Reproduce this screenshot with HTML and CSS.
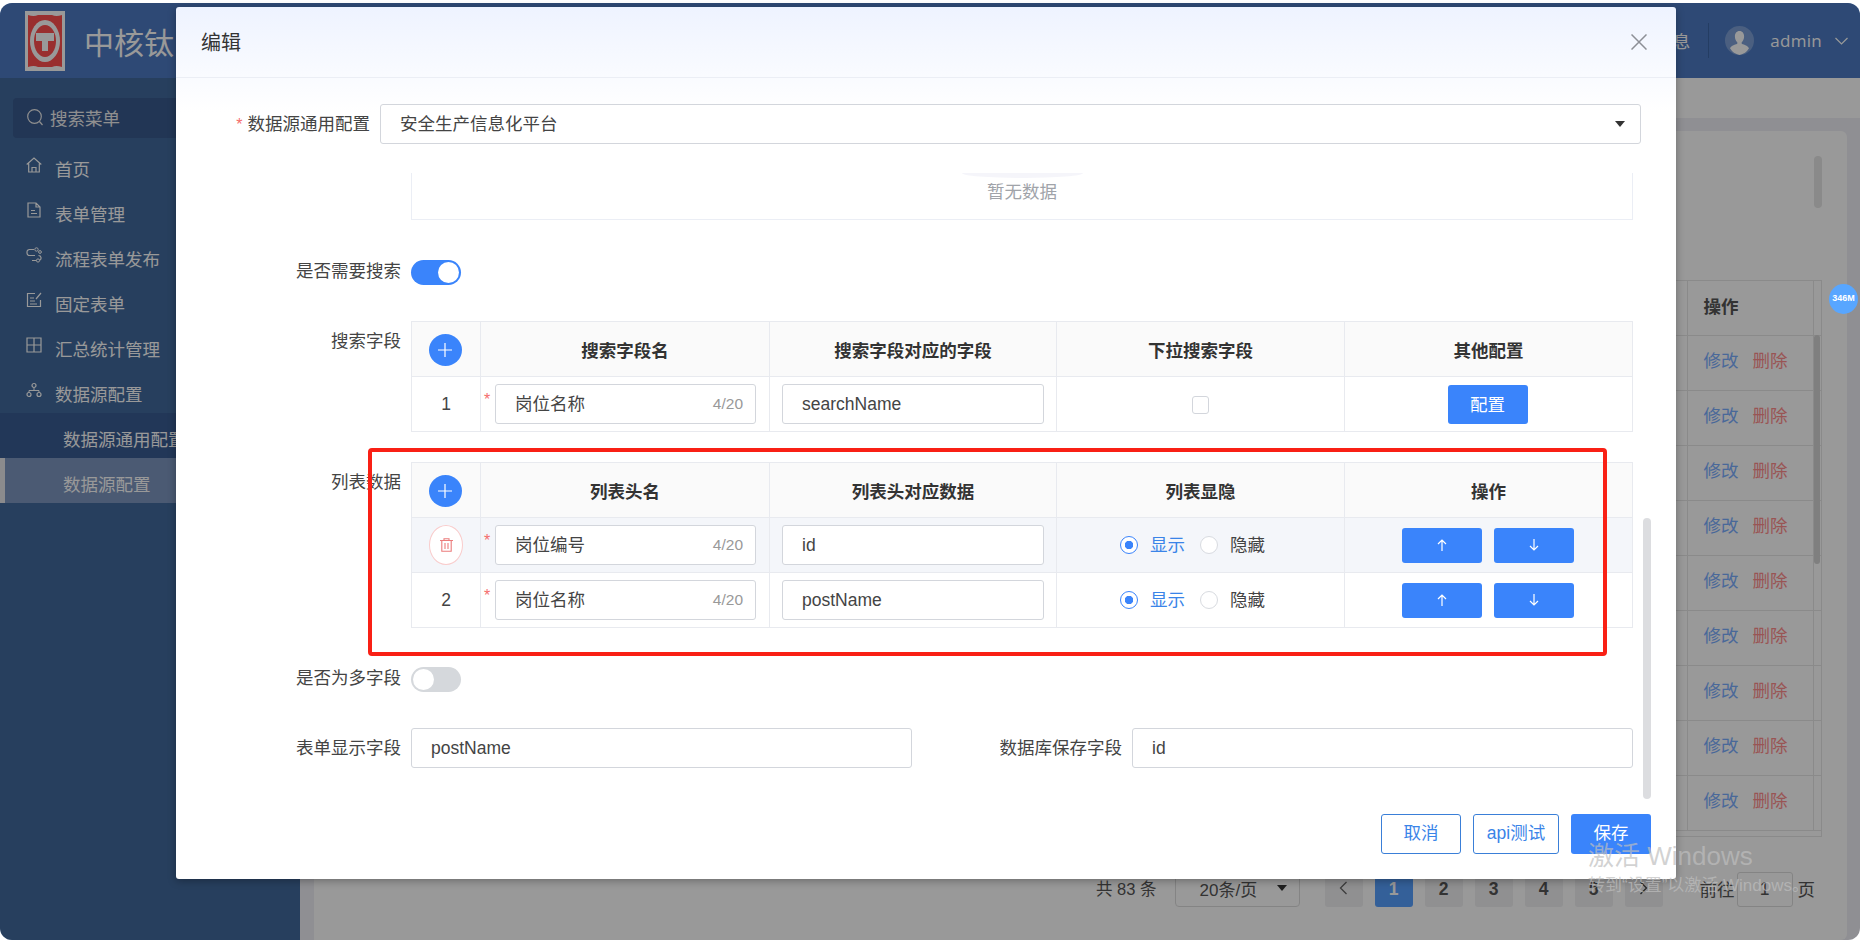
FILE: index.html
```html
<!DOCTYPE html>
<html lang="zh-CN">
<head>
    <meta charset="UTF-8">
    <title>数据源配置</title>
    <link rel="stylesheet" href="styles.css">
</head>
<body>
    <div class="app">
        <!-- Top bar -->
        <header class="topbar">
            <div class="brand">
                <svg class="logo" width="40" height="60" viewBox="0 0 40 60">
                    <rect width="40" height="60" fill="#fff"/>
                    <path d="M3 4q6 2 10 0h14q4 2 10 0v52q-6-2-10 0H13q-4-2-10 0z" fill="#ff4f4f"/>
                    <ellipse cx="20" cy="30" rx="15" ry="21" fill="#fff"/>
                    <ellipse cx="20" cy="30" rx="11" ry="16" fill="#ff4f4f"/>
                    <path d="M11 22h18v8h-6v10h-6V30h-6z" fill="#fff"/>
                </svg>
                <span class="brand-name">中核钛</span>
            </div>
            <div class="user-area">
                <span class="msg">消息</span>
                <span class="divider"></span>
                <svg class="avatar" width="29" height="29" viewBox="0 0 29 29">
                    <circle cx="14.5" cy="14.5" r="14.5" fill="#7d9fd6"/>
                    <path d="M14.5 5c3 0 4.600 2.400 4.600 5.500 0 2.500-1 4.500-2.400 5.700v1.600c2.800 1 6.300 2 7.300 4.500A14 14 0 0 1 14.500 29a14 14 0 0 1-9.500-6.700c1-2.500 4.500-3.500 7.300-4.500v-1.600c-1.400-1.200-2.400-3.200-2.400-5.700C9.900 7.400 11.500 5 14.500 5z" fill="#fff"/>
                </svg>
                <span class="username">admin</span>
                <svg class="chevron" width="13" height="8" viewBox="0 0 13 8"><path d="M.5 1l6 6 6-6" fill="none" stroke="#fff" stroke-width="1.200"/></svg>
            </div>
        </header>

        <div class="layout">
            <!-- Sidebar -->
            <aside class="sidebar">
                <div class="menu-search">
                    <svg width="16" height="17" viewBox="0 0 16 17"><circle cx="7.500" cy="7.500" r="6.800" fill="none" stroke="#eee" stroke-width="1.200"/><path d="M12.500 12.500l3 3.500" stroke="#eee" stroke-width="1.200"/></svg>
                    <span>搜索菜单</span>
                </div>
                <ul class="menu">
                    <li class="menu-item">
                        <svg width="16" height="16" viewBox="0 0 16 16"><path d="M.7 7.500L8 1l7.300 6.500M2.700 6.500V15h10.600V6.500M6 15v-4.500h4V15" fill="none" stroke="#fff" stroke-width="1.200"/></svg>
                        <span>首页</span>
                    </li>
                    <li class="menu-item">
                        <svg width="16" height="16" viewBox="0 0 16 16"><path d="M2 1h8l4 4v10H2zM10 1v4h4M5 8.500h4M5 11.500h6" fill="none" stroke="#fff" stroke-width="1.200"/></svg>
                        <span>表单管理</span>
                    </li>
                    <li class="menu-item">
                        <svg width="16" height="16" viewBox="0 0 16 16"><path d="M8 2.500H3.500A2.500 2.500 0 0 0 1 5v1a2.500 2.500 0 0 0 2.500 2.500H9M12.500 8.500a2.500 2.500 0 0 1 1 4.800M10.500 13.500H6" fill="none" stroke="#fff" stroke-width="1.200"/><circle cx="10.500" cy="2.500" r="1.700" fill="none" stroke="#fff"/><circle cx="14" cy="5" r="1.400" fill="none" stroke="#fff"/><circle cx="12" cy="13.500" r="1.600" fill="none" stroke="#fff"/></svg>
                        <span>流程表单发布</span>
                    </li>
                    <li class="menu-item">
                        <svg width="16" height="16" viewBox="0 0 16 16"><path d="M9 1.500H1.500v13h13V8M4 6h4M4 9h5M4 12h7M10 7l5-6" fill="none" stroke="#fff" stroke-width="1.200"/></svg>
                        <span>固定表单</span>
                    </li>
                    <li class="menu-item">
                        <svg width="16" height="16" viewBox="0 0 16 16"><path d="M1 1h14v14H1zM1 8h14M8 1v14" fill="none" stroke="#fff" stroke-width="1.200"/></svg>
                        <span>汇总统计管理</span>
                    </li>
                    <li class="menu-item">
                        <svg width="16" height="16" viewBox="0 0 16 16"><circle cx="8" cy="3.500" r="2" fill="none" stroke="#fff" stroke-width="1.200"/><circle cx="3" cy="12.500" r="2" fill="none" stroke="#fff" stroke-width="1.200"/><circle cx="13" cy="12.500" r="2" fill="none" stroke="#fff" stroke-width="1.200"/><path d="M3 10.500V8.500h10v2M8 5.500v3" fill="none" stroke="#fff"/></svg>
                        <span>数据源配置</span>
                    </li>
                    <li class="sub-item">数据源通用配置</li>
                    <li class="sub-item sub-item-active">数据源配置</li>
                </ul>
            </aside>

            <!-- Page behind the dialog -->
            <main class="main">
                <div class="tabs-bar"></div>
                <section class="card">
                    <div class="data-table">
                        <table>
                            <thead>
                                <tr><th></th><th class="op-col">操作</th><th class="gutter"></th></tr>
                            </thead>
                            <tbody>
                                <tr><td></td><td class="op-col"><a class="link-edit">修改</a><a class="link-del">删除</a></td><td class="gutter"></td></tr>
                                <tr><td></td><td class="op-col"><a class="link-edit">修改</a><a class="link-del">删除</a></td><td class="gutter"></td></tr>
                                <tr><td></td><td class="op-col"><a class="link-edit">修改</a><a class="link-del">删除</a></td><td class="gutter"></td></tr>
                                <tr><td></td><td class="op-col"><a class="link-edit">修改</a><a class="link-del">删除</a></td><td class="gutter"></td></tr>
                                <tr><td></td><td class="op-col"><a class="link-edit">修改</a><a class="link-del">删除</a></td><td class="gutter"></td></tr>
                                <tr><td></td><td class="op-col"><a class="link-edit">修改</a><a class="link-del">删除</a></td><td class="gutter"></td></tr>
                                <tr><td></td><td class="op-col"><a class="link-edit">修改</a><a class="link-del">删除</a></td><td class="gutter"></td></tr>
                                <tr><td></td><td class="op-col"><a class="link-edit">修改</a><a class="link-del">删除</a></td><td class="gutter"></td></tr>
                                <tr><td></td><td class="op-col"><a class="link-edit">修改</a><a class="link-del">删除</a></td><td class="gutter"></td></tr>
                            </tbody>
                        </table>
                        <div class="table-thumb"></div>
                    </div>
                    <div class="pager">
                        <span class="pager-total">共 83 条</span>
                        <div class="pager-size"><span>20条/页</span><i class="caret"></i></div>
                        <button class="page-btn">
                            <svg width="9" height="14" viewBox="0 0 9 14"><path d="M7.500 1L1.500 7l6 6" fill="none" stroke="#666" stroke-width="1.300"/></svg>
                        </button>
                        <button class="page-btn page-btn-active">1</button>
                        <button class="page-btn">2</button>
                        <button class="page-btn">3</button>
                        <button class="page-btn">4</button>
                        <button class="page-btn">5</button>
                        <button class="page-btn">
                            <svg width="9" height="14" viewBox="0 0 9 14"><path d="M1.500 1l6 6-6 6" fill="none" stroke="#444" stroke-width="1.300"/></svg>
                        </button>
                        <span class="pager-goto">前往</span>
                        <div class="pager-input">1</div>
                        <span class="pager-unit">页</span>
                    </div>
                    <div class="card-thumb"></div>
                </section>
            </main>
        </div>

        <div class="mask"></div>
    </div>

    <!-- Edit dialog -->
    <div class="dialog">
        <div class="dialog-header">
            <span class="dialog-title">编辑</span>
            <svg width="16" height="16" viewBox="0 0 16 16"><path d="M.5.500l15 15M15.500.500l-15 15" stroke="#8c8f96" stroke-width="1.500"/></svg>
        </div>

        <div class="source-row">
            <label class="source-label"><span class="star">*</span>数据源通用配置</label>
            <div class="select-box"><span class="cjk-text">安全生产信息化平台</span><i class="caret"></i></div>
        </div>

        <div class="form-area">
            <div class="empty-table">
                <div class="empty-image"></div>
                <span>暂无数据</span>
            </div>

            <div class="form-item item-toggle">
                <label>是否需要搜索</label>
                <div class="switch switch-on"><i></i></div>
            </div>

            <div class="form-item item-search">
                <label>搜索字段</label>
                <table class="edit-table">
                    <colgroup><col class="col-idx"><col class="col-a"><col class="col-b"><col class="col-c"><col class="col-d"></colgroup>
                    <thead>
                        <tr>
                            <th><button class="add-btn"><svg width="14" height="14" viewBox="0 0 14 14"><path d="M7 0v14M0 7h14" stroke="#fff" stroke-width="1.200"/></svg></button></th>
                            <th>搜索字段名</th>
                            <th>搜索字段对应的字段</th>
                            <th>下拉搜索字段</th>
                            <th>其他配置</th>
                        </tr>
                    </thead>
                    <tbody>
                        <tr>
                            <td>1</td>
                            <td><div class="name-cell"><span class="star">*</span><div class="input-box"><span class="cjk-text">岗位名称</span><em>4/20</em></div></div></td>
                            <td><div class="field-cell"><div class="input-box">searchName</div></div></td>
                            <td><i class="checkbox"></i></td>
                            <td><button class="btn-config">配置</button></td>
                        </tr>
                    </tbody>
                </table>
            </div>

            <div class="form-item item-list">
                <label>列表数据</label>
                <table class="edit-table">
                    <colgroup><col class="col-idx"><col class="col-a"><col class="col-b"><col class="col-c"><col class="col-d"></colgroup>
                    <thead>
                        <tr>
                            <th><button class="add-btn"><svg width="14" height="14" viewBox="0 0 14 14"><path d="M7 0v14M0 7h14" stroke="#fff" stroke-width="1.200"/></svg></button></th>
                            <th>列表头名</th>
                            <th>列表头对应数据</th>
                            <th>列表显隐</th>
                            <th>操作</th>
                        </tr>
                    </thead>
                    <tbody>
                        <tr class="row-hover">
                            <td>
                                <button class="del-btn">
                                    <svg width="13" height="14" viewBox="0 0 13 14"><path d="M0 2.500h13M4 2.500V.7h5v1.800M1.800 2.500V13.300h9.400V2.500M5 5v6M8 5v6" fill="none" stroke="#ec7c7c" stroke-width="1.100"/></svg>
                                </button>
                            </td>
                            <td><div class="name-cell"><span class="star">*</span><div class="input-box"><span class="cjk-text">岗位编号</span><em>4/20</em></div></div></td>
                            <td><div class="field-cell"><div class="input-box">id</div></div></td>
                            <td>
                                <div class="radio-group">
                                    <i class="radio radio-on"></i><span class="radio-text radio-text-on">显示</span>
                                    <i class="radio"></i><span class="radio-text">隐藏</span>
                                </div>
                            </td>
                            <td>
                                <div class="move-btns">
                                    <button class="btn-move"><svg width="10" height="12" viewBox="0 0 10 12"><path d="M5 12V1M1 5l4-4 4 4" fill="none" stroke="#fff" stroke-width="1.200"/></svg></button>
                                    <button class="btn-move"><svg width="10" height="12" viewBox="0 0 10 12"><path d="M5 0v11M1 7l4 4 4-4" fill="none" stroke="#fff" stroke-width="1.200"/></svg></button>
                                </div>
                            </td>
                        </tr>
                        <tr>
                            <td>2</td>
                            <td><div class="name-cell"><span class="star">*</span><div class="input-box"><span class="cjk-text">岗位名称</span><em>4/20</em></div></div></td>
                            <td><div class="field-cell"><div class="input-box">postName</div></div></td>
                            <td>
                                <div class="radio-group">
                                    <i class="radio radio-on"></i><span class="radio-text radio-text-on">显示</span>
                                    <i class="radio"></i><span class="radio-text">隐藏</span>
                                </div>
                            </td>
                            <td>
                                <div class="move-btns">
                                    <button class="btn-move"><svg width="10" height="12" viewBox="0 0 10 12"><path d="M5 12V1M1 5l4-4 4 4" fill="none" stroke="#fff" stroke-width="1.200"/></svg></button>
                                    <button class="btn-move"><svg width="10" height="12" viewBox="0 0 10 12"><path d="M5 0v11M1 7l4 4 4-4" fill="none" stroke="#fff" stroke-width="1.200"/></svg></button>
                                </div>
                            </td>
                        </tr>
                    </tbody>
                </table>
            </div>

            <div class="form-item item-toggle item-multi">
                <label>是否为多字段</label>
                <div class="switch"><i></i></div>
            </div>

            <div class="form-item item-fields">
                <label>表单显示字段</label>
                <div class="input-box field-wide">postName</div>
                <label class="label-second">数据库保存字段</label>
                <div class="input-box field-wide">id</div>
            </div>
        </div>

        <div class="dialog-footer">
            <button class="btn-outline">取消</button>
            <button class="btn-outline btn-api">api测试</button>
            <button class="btn-save">保存</button>
        </div>
        <div class="dialog-scrollbar"></div>
    </div>

    <div class="memory-badge">346M</div>
    <div class="red-box"></div>

    <div class="watermark">
        <div class="watermark-title">激活 Windows</div>
        <div class="watermark-sub">转到“设置”以激活 Windows。</div>
    </div>
</body>
</html>
```

FILE: styles.css
```css
* {
    margin: 0;
    padding: 0;
    box-sizing: border-box;
}

html {
    height: 940px;
    overflow: hidden;
}

body {
    position: relative;
    width: 1860px;
    height: 940px;
    padding-top: 3px;
    overflow: hidden;
    background-color: #fff;
    font-family: "Liberation Sans", "Noto Sans CJK SC", sans-serif;
    font-size: 17.5px;
    color: #444;
}

button {
    border: none;
    font: inherit;
    cursor: pointer;
}

ul {
    list-style: none;
}

i, em {
    font-style: normal;
}

.app {
    position: relative;
    height: 937px;
    border-radius: 12px;
    overflow: hidden;
    display: flex;
    flex-direction: column;
}

/* Top bar */
.topbar {
    height: 75px;
    flex-shrink: 0;
    background-color: #4d7bc3;
    display: flex;
    justify-content: space-between;
    align-items: center;
    color: #fff;
}

.brand {
    display: flex;
    align-items: center;
    padding-left: 25px;
}

.brand-name {
    margin-left: 19px;
    font-size: 30px;
}

.user-area {
    display: flex;
    align-items: center;
    padding-right: 12px;
}

.divider {
    width: 1px;
    height: 35px;
    margin: 0 16px 0 18px;
    background-color: #3d66a6;
}

.username {
    margin: 0 13px 0 16px;
    font-family: "Open Sans", sans-serif;
    font-size: 17px;
    letter-spacing: 0.3px;
}

.layout {
    flex: 1;
    display: flex;
    min-height: 0;
}

/* Sidebar */
.sidebar {
    width: 300px;
    flex-shrink: 0;
    background-color: #41699d;
    padding-top: 20px;
    color: #fff;
}

.menu-search {
    height: 40px;
    margin-left: 13px;
    padding: 0 0 2px 14px;
    display: flex;
    align-items: center;
    gap: 7px;
    background-color: #395a8e;
    border-radius: 4px;
    color: #eee;
}

.menu {
    margin-top: 5px;
}

.menu-item {
    height: 45px;
    padding: 5px 0 0 26px;
    display: flex;
    align-items: center;
    gap: 13px;
}

.menu-item svg {
    margin-top: -6px;
}

.sub-item {
    height: 45px;
    padding: 8px 0 0 63px;
    line-height: 38px;
    white-space: nowrap;
    background-color: #3a5c93;
}

.sub-item-active {
    background-color: #7d96c0;
    border-left: 5px solid #e8e8ec;
    padding-left: 58px;
}

/* Page behind the dialog */
.main {
    flex: 1;
    background-color: #eeeef5;
    display: flex;
    flex-direction: column;
    min-width: 0;
}

.tabs-bar {
    height: 40px;
    flex-shrink: 0;
    background-color: #fff;
}

.card {
    position: relative;
    flex: 1;
    margin: 13px 13px 0 14px;
    padding: 149px 25px 0;
    background-color: #fff;
    border-radius: 6px 6px 6px 0;
}

.card-thumb {
    position: absolute;
    top: 25px;
    right: 25px;
    width: 8px;
    height: 52px;
    border-radius: 4px;
    background-color: #e6e6e6;
}

.data-table {
    position: relative;
    height: 557px;
    border: 1px solid #e6e6e6;
    overflow: hidden;
}

.data-table table {
    width: 100%;
    border-collapse: collapse;
    table-layout: fixed;
}

.data-table th,
.data-table td {
    height: 55px;
    padding-bottom: 7px;
    border-bottom: 1px solid #e6e6e6;
    text-align: left;
}

.data-table th {
    height: 54px;
    padding-bottom: 4px;
    color: #555;
}

.op-col {
    width: 126px;
    padding-left: 16px;
    border-left: 1px solid #e6e6e6;
    border-right: 1px solid #e6e6e6;
}

.gutter {
    width: 8px;
}

.link-edit {
    color: #7aaeff;
    margin-right: 14px;
}

.link-del {
    color: #ff8d8d;
}

.table-thumb {
    position: absolute;
    top: 54px;
    right: 1px;
    width: 6px;
    height: 229px;
    border-radius: 3px;
    background-color: #d4d4d4;
}

.pager {
    margin-top: 35px;
    padding-bottom: 3px;
    display: flex;
    justify-content: flex-end;
    align-items: center;
    height: 35px;
    color: #555;
}

.pager-total {
    font-size: 16.5px;
    margin-right: 18px;
}

.pager-size {
    width: 125px;
    height: 38px;
    margin: 0 25px 0 0;
    padding: 0 12px 0 24px;
    display: flex;
    justify-content: space-between;
    align-items: center;
    border: 1px solid #ddd;
    border-radius: 4px;
    font-size: 17px;
}

.page-btn {
    width: 38px;
    height: 35px;
    margin: 3px 12px 0 0;
    background-color: #f0f0f2;
    border-radius: 3px;
    font-weight: bold;
    color: #555;
}

.page-btn:nth-of-type(7) {
    margin-right: 37px;
}

.page-btn-active {
    background-color: #58a0ff;
    color: #fff;
}

.pager-input {
    width: 56px;
    height: 35px;
    margin: 3px 5px 0 2px;
    text-align: center;
    line-height: 33px;
    border: 1px solid #ddd;
    border-radius: 3px;
}

.pager-unit {
    margin-right: 7px;
}

.caret {
    width: 0;
    height: 0;
    border-left: 5px solid transparent;
    border-right: 5px solid transparent;
    border-top: 6px solid #333;
}

.mask {
    position: absolute;
    top: 0;
    left: 0;
    width: 100%;
    height: 100%;
    background-color: rgba(0, 0, 0, 0.4);
}

/* Dialog */
.dialog {
    position: absolute;
    top: 7px;
    left: 176px;
    width: 1500px;
    height: 872px;
    display: flex;
    flex-direction: column;
    background: linear-gradient(#eef3ff, #fff 105px) #fff;
    border-radius: 3px;
    box-shadow: 0 2px 8px rgba(0, 0, 0, 0.3);
}

.dialog-header {
    height: 71px;
    flex-shrink: 0;
    padding: 0 29px 0 25px;
    display: flex;
    justify-content: space-between;
    align-items: center;
    border-bottom: 1px solid #ebeef5;
}

.dialog-title {
    font-size: 20px;
    color: #333;
    padding-bottom: 2px;
}

.source-row {
    margin-top: 26px;
    padding-right: 35px;
    display: flex;
    align-items: center;
}

.source-label {
    width: 194px;
    padding-bottom: 3px;
    text-align: right;
    flex-shrink: 0;
}

.star {
    color: #f56c6c;
    font-size: 16px;
    margin-right: 5px;
}

.select-box {
    flex: 1;
    height: 40px;
    margin-left: 10px;
    padding: 0 15px 0 19px;
    display: flex;
    justify-content: space-between;
    align-items: center;
    background-color: #fff;
    border: 1px solid #d3d6dc;
    border-radius: 3px;
}

.cjk-text {
    padding-bottom: 3px;
}

.form-area {
    padding-right: 43px;
}

.empty-table {
    margin: 29px 0 0 235px;
    height: 47px;
    display: flex;
    flex-direction: column;
    align-items: center;
    border: 1px solid #ebeef5;
    border-top: none;
    color: #a0a3a9;
    line-height: 24px;
}

.empty-image {
    width: 121px;
    height: 5px;
    margin-bottom: 2px;
    background-color: #f5f5fa;
    border-radius: 0 0 60px 60px / 0 0 5px 5px;
}

.form-item {
    display: flex;
    align-items: flex-start;
}

.form-item > label {
    width: 235px;
    padding: 0 10px 3px 0;
    flex-shrink: 0;
    text-align: right;
    line-height: 40px;
}

.item-toggle {
    margin-top: 40px;
    height: 25px;
    align-items: center;
}

.item-search {
    margin-top: 36px;
}

.item-list {
    margin-top: 30px;
}

.item-multi {
    margin-top: 39px;
}

.item-fields {
    margin-top: 36px;
}

.switch {
    width: 50px;
    height: 25px;
    padding: 2px;
    display: flex;
    background-color: #d5d8dc;
    border-radius: 13px;
}

.switch i {
    width: 21px;
    height: 21px;
    background-color: #fff;
    border-radius: 50%;
}

.switch-on {
    justify-content: flex-end;
    background-color: #3a84fb;
}

.edit-table {
    width: 1221px;
    border-collapse: collapse;
    table-layout: fixed;
}

.col-idx { width: 69px; }
.col-a { width: 289px; }
.col-b { width: 287px; }
.col-c { width: 288px; }
.col-d { width: 288px; }

.edit-table th,
.edit-table td {
    height: 55px;
    border: 1px solid #e8eaef;
    text-align: center;
}

.edit-table th {
    background-color: #fafafa;
    color: #333;
}

.row-hover td {
    background-color: #f4f6fa;
}

.add-btn {
    width: 33px;
    height: 32px;
    margin: 2px 0 0 -2px;
    display: inline-flex;
    justify-content: center;
    align-items: center;
    vertical-align: middle;
    background-color: #3a84fb;
    border-radius: 50%;
}

.del-btn {
    width: 34px;
    height: 40px;
    display: inline-flex;
    justify-content: center;
    align-items: center;
    vertical-align: middle;
    background-color: #fff;
    border: 1px solid #f9cccc;
    border-radius: 50%;
}

.name-cell {
    padding: 0 13px 0 3px;
    display: flex;
    align-items: center;
}

.name-cell .star {
    width: 11px;
    margin: 0;
    text-align: left;
    align-self: flex-start;
    line-height: 32px;
}

.field-cell {
    padding: 0 12px 0 12px;
}

.input-box {
    flex: 1;
    height: 40px;
    padding: 0 12px 0 19px;
    display: flex;
    justify-content: space-between;
    align-items: center;
    background-color: #fff;
    border: 1px solid #d3d6dc;
    border-radius: 3px;
    text-align: left;
}

.input-box em {
    font-size: 15.5px;
    color: #999;
}

.field-wide {
    flex: none;
    width: 501px;
}

.form-item > .label-second {
    width: 220px;
    white-space: nowrap;
}

.checkbox {
    display: inline-block;
    width: 17px;
    height: 18px;
    vertical-align: middle;
    border: 1px solid #d3d6dc;
    border-radius: 3px;
}

.btn-config {
    width: 80px;
    height: 39px;
    margin-right: 2px;
    padding-bottom: 2px;
    vertical-align: middle;
    background-color: #3a84fb;
    border-radius: 3px;
    color: #fff;
}

.radio-group {
    padding-right: 16px;
    display: flex;
    justify-content: center;
    align-items: center;
}

.radio {
    width: 18px;
    height: 18px;
    background-color: #fff;
    border: 1px solid #d8dbe0;
    border-radius: 50%;
}

.radio-on {
    border-color: #3a84fb;
    background: radial-gradient(circle, #3a84fb 0 4px, #fff 4.500px);
}

.radio-text {
    margin-left: 12px;
    padding-bottom: 3px;
}

.radio-text-on {
    margin-right: 15px;
    color: #3a84e8;
}

.move-btns {
    padding-right: 2px;
    display: flex;
    justify-content: center;
    gap: 12px;
}

.btn-move {
    width: 80px;
    height: 35px;
    display: flex;
    justify-content: center;
    align-items: center;
    background-color: #3a84fb;
    border-radius: 3px;
}

.dialog-footer {
    margin-top: auto;
    padding: 0 25px 25px 0;
    display: flex;
    justify-content: flex-end;
    gap: 12px;
}

.btn-outline {
    width: 80px;
    height: 40px;
    padding-bottom: 6px;
    background-color: #fff;
    border: 1px solid #3a7fd8;
    border-radius: 3px;
    color: #3a84e8;
}

.btn-api {
    width: 86px;
}

.btn-save {
    width: 80px;
    height: 40px;
    padding-bottom: 6px;
    background-color: #3a84fb;
    border-radius: 3px;
    color: #fff;
}

.dialog-scrollbar {
    position: absolute;
    top: 511px;
    left: 1467px;
    width: 8px;
    height: 281px;
    border-radius: 4px;
    background-color: #dcdde0;
}

.memory-badge {
    position: absolute;
    top: 284px;
    left: 1829px;
    width: 29px;
    height: 30px;
    text-align: center;
    line-height: 29px;
    border-radius: 50%;
    background-color: #58a6ff;
    color: #fff;
    font-size: 9px;
    font-weight: bold;
}

.red-box {
    position: absolute;
    top: 448px;
    left: 368px;
    width: 1239px;
    height: 208px;
    border: 4px solid #f92015;
    border-radius: 4px;
}

.watermark {
    position: absolute;
    top: 840px;
    left: 1588px;
    color: rgba(190, 190, 190, 0.7);
    white-space: nowrap;
}

.watermark-title {
    font-size: 26px;
    line-height: 32px;
}

.watermark-sub {
    margin-top: 3px;
    font-size: 17px;
    line-height: 22px;
}
```
